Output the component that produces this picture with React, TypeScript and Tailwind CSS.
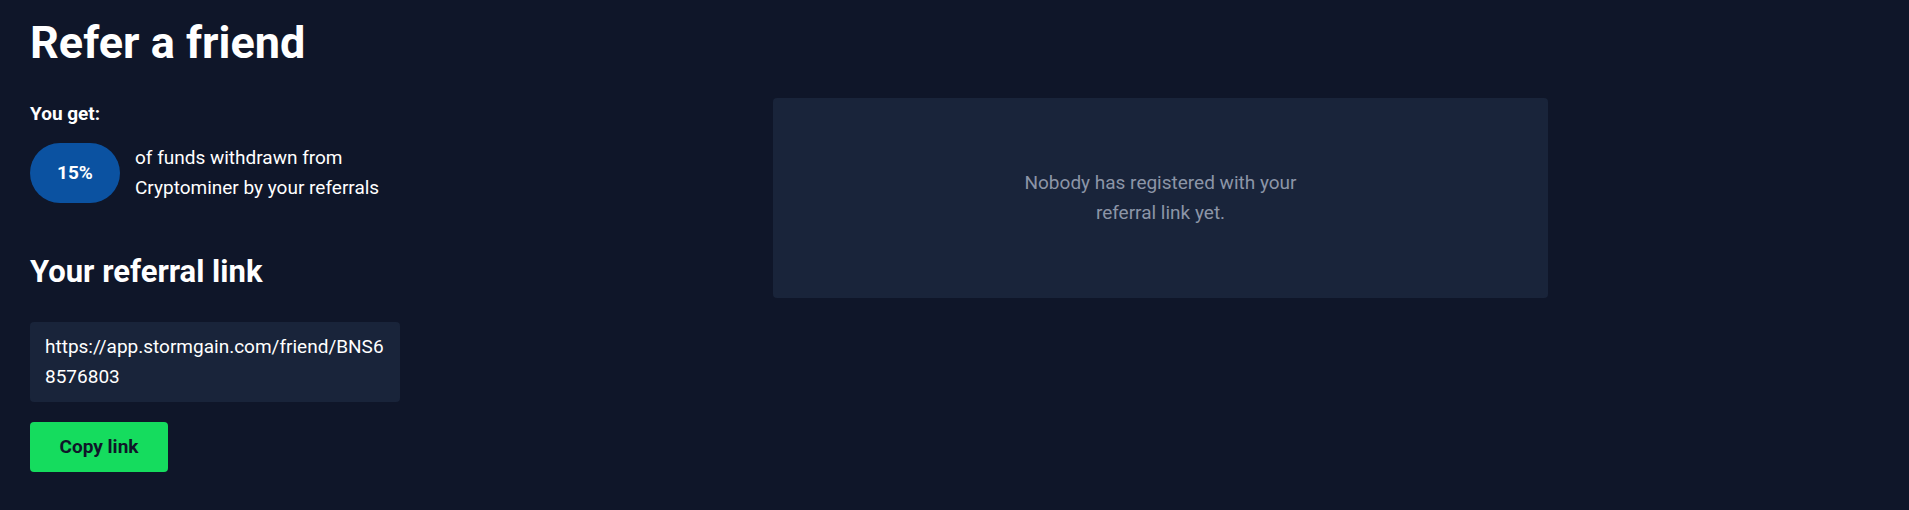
export default function App() {
  return (
    <div
      className="min-h-[510px] w-full bg-[#0f1629] text-white"
      style={{ fontFamily: "Roboto, 'Noto Sans', sans-serif" }}
    >
      <div className="px-[30px] pt-[20px]">
        <h1 className="text-[45px] font-bold leading-none">Refer a friend</h1>
        <div className="mt-[33px] grid grid-cols-[743px_775px]">
          <div className="flex flex-col items-start">
            <div className="mt-px text-[19px] font-bold leading-[30px]">You get:</div>
            <div className="mt-[14px] flex items-center gap-[15px]">
              <div className="flex h-[60px] w-[90px] items-center justify-center rounded-full bg-[#0b52a1] text-[19px] font-bold">
                15%
              </div>
              <div className="text-[19px] leading-[30px]">
                of funds withdrawn from
                <br />
                Cryptominer by your referrals
              </div>
            </div>
            <h2 className="mt-[51px] text-[31px] font-bold leading-[36px]">Your referral link</h2>
            <div className="mt-[32px] w-[370px] break-all rounded-[4px] bg-[#19243a] px-[15px] py-[10px] text-[19px] leading-[30px]">
              https://app.stormgain.com/friend/BNS68576803
            </div>
            <button className="mt-[20px] flex h-[50px] w-[138px] items-center justify-center rounded-[4px] bg-[#15dc5e] text-[19px] font-bold text-[#0f1629]">
              Copy link
            </button>
          </div>
          <div className="flex h-[200px] items-center justify-center rounded-[4px] bg-[#19243a]">
            <p className="max-w-[300px] text-center text-[19px] leading-[30px] text-[#8c95a7]">
              Nobody has registered with your referral link yet.
            </p>
          </div>
        </div>
      </div>
    </div>
  );
}
